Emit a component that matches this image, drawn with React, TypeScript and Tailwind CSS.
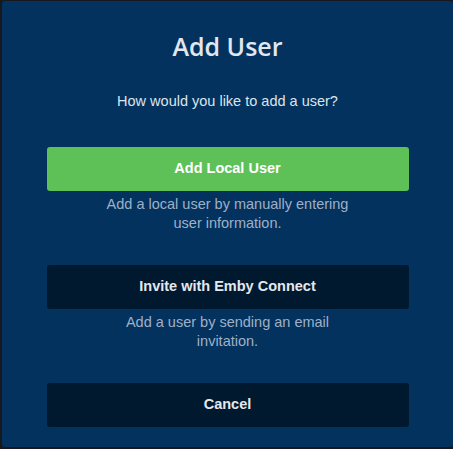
const sans = "font-['Liberation_Sans',Arial,sans-serif]"

interface OptionProps {
  label: string
  description?: string
  primary?: boolean
}

const Option = ({ label, description, primary }: OptionProps) => (
  <div className="flex flex-col items-center">
    <button
      className={`flex h-[44px] w-[362px] items-center justify-center rounded-[3px] text-[14.5px] font-bold ${sans} ${
        primary ? 'bg-[#5dc158] text-white' : 'bg-[#01192f] text-[#e4e8ee]'
      }`}
    >
      {label}
    </button>
    {description && (
      <p className={`mt-[4px] w-[248px] text-center text-[14.5px] leading-[19px] text-[#9fb0c6] ${sans}`}>
        {description}
      </p>
    )}
  </div>
)

export default function App() {
  return (
    <div className="h-[449px] w-[453px] overflow-hidden bg-[#16191e] pl-[2px] pt-[1px]">
      <div className="flex h-[446px] w-[451px] flex-col items-center rounded-[3px] bg-[#03325f] pt-[29px]">
        <h1 className="font-['Open_Sans',sans-serif] text-[25px] font-semibold leading-[32px] text-[#e1e7ee]">
          Add User
        </h1>
        <p className={`mt-[29px] text-[14.5px] leading-[20px] text-[#dde4ec] ${sans}`}>
          How would you like to add a user?
        </p>
        <div className="mt-[36px]">
          <Option label="Add Local User" description="Add a local user by manually entering user information." primary />
        </div>
        <div className="mt-[32px]">
          <Option label="Invite with Emby Connect" description="Add a user by sending an email invitation." />
        </div>
        <div className="mt-[32px]">
          <Option label="Cancel" />
        </div>
      </div>
    </div>
  )
}
